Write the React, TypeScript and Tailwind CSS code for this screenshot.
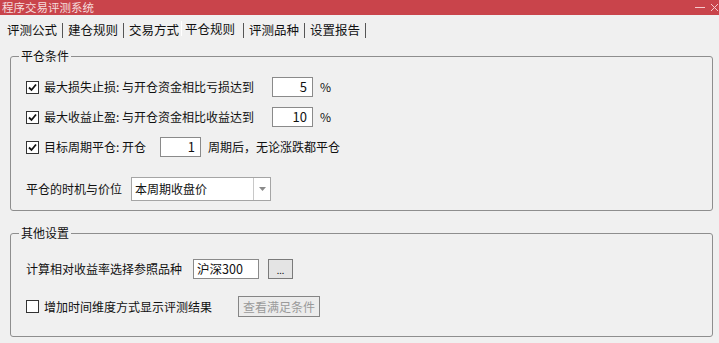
import React from 'react';

const font = "font-['Noto_Sans_CJK_SC','Liberation_Sans',sans-serif]";

const CheckBox = ({ checked }: { checked: boolean }) => (
  <span className="w-[13px] h-[13px] border border-[#333] bg-white flex items-center justify-center shrink-0">
    {checked && (
      <svg width="9" height="9" viewBox="0 0 9 9">
        <path d="M1 4.5 L3.5 7 L8 1.5" stroke="#111" strokeWidth="1.8" fill="none" />
      </svg>
    )}
  </span>
);

const NumBox = ({ value, w }: { value: string; w: string }) => (
  <span className={`${w} h-[20px] bg-white border border-[#8a8a8a] flex items-center justify-end pr-[5px] text-[13px] shrink-0`}>
    {value}
  </span>
);

const Group = ({ title, h, children }: { title: string; h: string; children: React.ReactNode }) => (
  <div className={`relative ${h} border border-[#8e8e8e] rounded-[3px]`}>
    <span className="absolute -top-[8px] left-[8px] px-[2px] bg-[#f0f0f0] leading-[14px]">{title}</span>
    {children}
  </div>
);

const tabs = ['评测公式', '建仓规则', '交易方式', '平仓规则', '评测品种', '设置报告'];

export default function App() {
  return (
    <div className={`w-[719px] h-[343px] bg-[#f0f0f0] overflow-hidden flex flex-col text-[12px] text-[#111] ${font}`}>
      {/* title bar */}
      <div className="h-[15px] bg-[#c9444b] flex items-center justify-between shrink-0">
        <span className="pl-[2px] text-[11.5px] leading-[13px] text-[#f5dcdd]">程序交易评测系统</span>
        <div className="flex items-center h-[12px] gap-[6px] pr-[1px]">
          <span className="w-[10px] h-px bg-[#f5c9cc]" />
          <svg width="7" height="7" viewBox="0 0 7 7">
            <path d="M0 0 L7 7 M7 0 L0 7" stroke="#f5c9cc" strokeWidth="1" />
          </svg>
        </div>
      </div>

      {/* tabs */}
      <div className="h-[26px] flex items-start pt-[8px] pl-[7px] gap-[5px] text-[12.5px] leading-[14px] shrink-0">
        {tabs.map((t, i) => {
          const active = i === 3;
          return (
            <React.Fragment key={t}>
              {active ? (
                <span className="-mt-[2px] -ml-[3px] px-[3px] pt-[1px] border-l border-white">{t}</span>
              ) : (
                <span>{t}</span>
              )}
              {i !== 2 && <span className="w-px h-[15px] bg-[#555]" />}
            </React.Fragment>
          );
        })}
      </div>

      {/* content */}
      <div className="flex flex-col pl-[10px] pr-[6px] pt-[15px] gap-[22px]">
        <Group title="平仓条件" h="h-[155px]">
          <div className="flex flex-col pt-[20px] pl-[15px] gap-[10px]">
            <div className="h-[20px] flex items-center">
              <CheckBox checked />
              <span className="ml-[5px] w-[228px]">最大损失止损: 与开仓资金相比亏损达到</span>
              <NumBox value="5" w="w-[41px]" />
              <span className="ml-[7px]">%</span>
            </div>
            <div className="h-[20px] flex items-center">
              <CheckBox checked />
              <span className="ml-[5px] w-[228px]">最大收益止盈: 与开仓资金相比收益达到</span>
              <NumBox value="10" w="w-[41px]" />
              <span className="ml-[7px]">%</span>
            </div>
            <div className="h-[20px] flex items-center">
              <CheckBox checked />
              <span className="ml-[5px] w-[116px]">目标周期平仓: 开仓</span>
              <NumBox value="1" w="w-[41px]" />
              <span className="ml-[7px]">周期后，无论涨跌都平仓</span>
            </div>
            <div className="h-[24px] flex items-center mt-[10px]">
              <span className="w-[105px]">平仓的时机与价位</span>
              <div className="w-[140px] h-[24px] bg-white border border-[#a5a5a5] flex items-center">
                <span className="flex-1 pl-[3px]">本周期收盘价</span>
                <span className="w-[17px] h-full border-l border-[#c8c8c8] flex items-center justify-center">
                  <svg width="7" height="4" viewBox="0 0 7 4">
                    <path d="M0 0 L7 0 L3.5 4 Z" fill="#8a8a8a" />
                  </svg>
                </span>
              </div>
            </div>
          </div>
        </Group>

        <Group title="其他设置" h="h-[104px]">
          <div className="flex flex-col pt-[25px] pl-[15px] gap-[17px]">
            <div className="h-[20px] flex items-center">
              <span className="w-[167px]">计算相对收益率选择参照品种</span>
              <span className="w-[66px] h-[20px] bg-white border border-[#8a8a8a] flex items-center pl-[3px] text-[12.5px]">沪深300</span>
              <span className="ml-[9px] w-[25px] h-[20px] bg-[#e4e4e4] border border-[#7a7a7a] flex items-center justify-center text-[9px] leading-none pt-[3px]">...</span>
            </div>
            <div className="h-[21px] flex items-center">
              <CheckBox checked={false} />
              <span className="ml-[5px] w-[194px]">增加时间维度方式显示评测结果</span>
              <span className="w-[82px] h-[21px] bg-[#ececec] border border-[#858585] flex items-center justify-center text-[#9a9a9a]">查看满足条件</span>
            </div>
          </div>
        </Group>
      </div>
    </div>
  );
}
